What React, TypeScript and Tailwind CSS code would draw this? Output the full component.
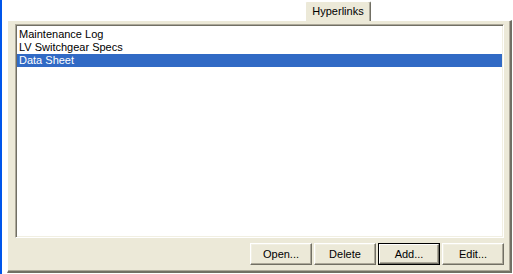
const items = [
  { label: "Maintenance Log", selected: false },
  { label: "LV Switchgear Specs", selected: false },
  { label: "Data Sheet", selected: true },
];

const buttons = [
  { label: "Open...", isDefault: false },
  { label: "Delete", isDefault: false },
  { label: "Add...", isDefault: true },
  { label: "Edit...", isDefault: false },
];

function Button({ label, isDefault }: { label: string; isDefault: boolean }) {
  // classic raised bevel; the default button gets an extra black frame
  if (isDefault) {
    return (
      <div className="h-[22px] w-[62px] border border-black">
        <button className="flex h-full w-full items-center justify-center border border-t-white border-l-white border-r-[#716F64] border-b-[#716F64] bg-[#ECE9D8] text-[11px] leading-none text-black shadow-[inset_-1px_-1px_0_#ACA899]">
          {label}
        </button>
      </div>
    );
  }
  return (
    <button className="flex h-[22px] w-[62px] items-center justify-center border border-t-white border-l-white border-r-[#716F64] border-b-[#716F64] bg-[#ECE9D8] text-[11px] leading-none text-black shadow-[inset_-1px_-1px_0_#ACA899,inset_1px_1px_0_#F1EFE2]">
      {label}
    </button>
  );
}

export default function App() {
  return (
    <div
      className="flex h-[274px] w-[513px] overflow-hidden bg-white"
      style={{ fontFamily: '"Liberation Sans", Arial, sans-serif' }}
    >
      <div className="w-[2px] shrink-0 bg-[#0055EA]" />

      <div className="ml-[5px] flex h-[273px] w-[505px] flex-col">
        {/* tab strip */}
        <div className="flex h-[20px] shrink-0 items-end">
          <div className="relative z-10 mb-[-1px] ml-[298px] flex h-[20px] w-[66px] items-center justify-center rounded-t-[2px] border-t border-l border-r border-t-white border-l-white border-r-[#716F64] bg-[#ECE9D8] pb-[1px] text-[11px] leading-none text-black shadow-[inset_-1px_0_0_#ACA899]">
            Hyperlinks
          </div>
        </div>

        {/* tab page */}
        <div className="flex min-h-0 flex-1 flex-col border-t border-l border-r-2 border-b-2 border-t-white border-l-white border-r-[#716F64] border-b-[#716F64] bg-[#ECE9D8] pt-[3px] pr-[6px] pb-[6px] pl-[7px] shadow-[inset_-1px_-1px_0_#ACA899]">
          <div className="min-h-0 flex-1 border border-t-[#ACA899] border-l-[#ACA899] border-r-white border-b-white bg-white px-[1px] pt-[3px] shadow-[inset_1px_1px_0_#716F64,inset_-1px_-1px_0_#F1EFE2]">
            {items.map((it) => (
              <div
                key={it.label}
                className={
                  it.selected
                    ? "h-[13px] bg-[#316AC5] pl-[2px] text-[11px] leading-[13px] text-white"
                    : "h-[13px] pl-[2px] text-[11px] leading-[13px] text-black"
                }
              >
                {it.label}
              </div>
            ))}
          </div>

          <div className="mt-[5px] flex shrink-0 justify-end gap-[2px]">
            {buttons.map((b) => (
              <Button key={b.label} label={b.label} isDefault={b.isDefault} />
            ))}
          </div>
        </div>
      </div>
    </div>
  );
}
